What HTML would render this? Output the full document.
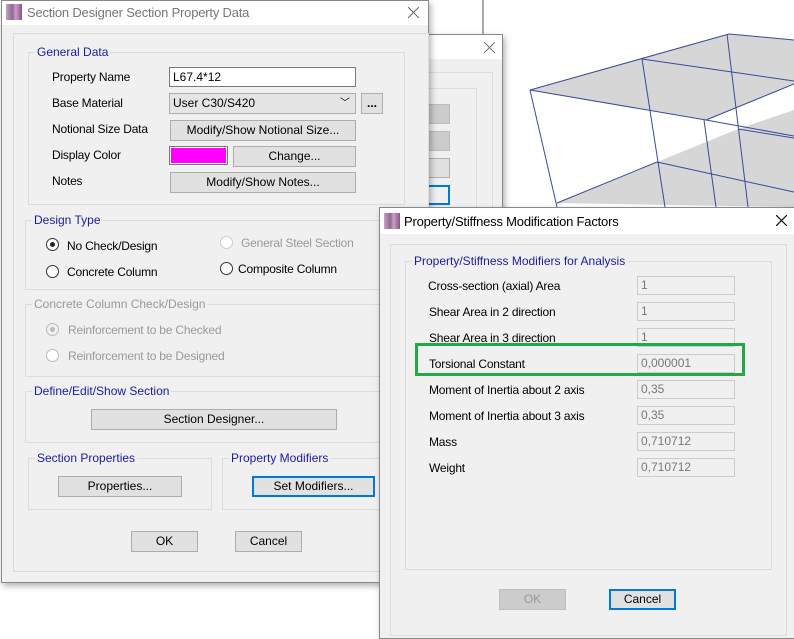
<!DOCTYPE html>
<html><head><meta charset="utf-8"><style>
*{margin:0;padding:0;box-sizing:border-box}
body{width:794px;height:635px;position:relative;overflow:hidden;background:#fff;font-family:"Liberation Sans",sans-serif;font-size:12px;color:#000}
.a{position:absolute}
.win{position:absolute;background:#f0f0f0;border:1px solid #888;box-shadow:2px 3px 6px rgba(0,0,0,.3)}
.tb{position:absolute;left:0;right:0;top:0;height:24px;background:#fff}
.grp{position:absolute;border:1px solid #dcdcdc}
.gl{position:absolute;top:-8px;left:6px;background:#f0f0f0;padding:0 2px;color:#1a1aa6;white-space:nowrap}
.btn{position:absolute;background:#e1e1e1;border:1px solid #adadad;text-align:center;line-height:18px;white-space:nowrap}
.inp{position:absolute;background:#f0f0f0;border:1px solid #ccc;color:#777;padding-left:3px;line-height:17px}
.rad{position:absolute;width:13px;height:13px;border:1px solid #333;border-radius:50%;background:#fff}
.lb{position:absolute;white-space:nowrap;letter-spacing:-0.2px}
.icon{position:absolute;width:16px;height:16px;background:linear-gradient(90deg,#c9a0b8,#8a6a9a 40%,#d59ac0 60%,#7a5a8a);}
</style></head><body>
<svg class="a" style="left:0;top:0" width="794" height="635">
<line x1="483" y1="0" x2="483" y2="35" stroke="#555"/>
<polygon points="530,90 729,34 794,40 794,84 706,120" fill="#d6d6d6"/>
<polygon points="557,203 657,162 738,129 794,110 794,207" fill="#d6d6d6"/>
<g stroke="#3a4a9a" stroke-width="1" fill="none">
<line x1="530" y1="90" x2="729" y2="34"/>
<line x1="729" y1="34" x2="794" y2="40"/>
<line x1="530" y1="90" x2="706" y2="120"/>
<line x1="706" y1="120" x2="794" y2="84"/>
<line x1="642" y1="59" x2="794" y2="81"/>
<line x1="706" y1="120" x2="794" y2="136"/>
<line x1="530" y1="90" x2="557" y2="207"/>
<line x1="642" y1="59" x2="665" y2="207"/>
<line x1="727" y1="34" x2="748" y2="207"/>
<line x1="704" y1="120" x2="716" y2="207"/>
<line x1="557" y1="203" x2="657" y2="162"/>
<line x1="657" y1="162" x2="794" y2="192"/>
<line x1="738" y1="129" x2="794" y2="138"/>
</g>
</svg>
<div class="win" style="left:420px;top:34px;width:83px;height:180px">
<div class="tb"></div>
<svg class="a" style="left:63px;top:7px" width="11" height="11"><path d="M0 0L11 11M11 0L0 11" stroke="#777" stroke-width="1"/></svg>
<div class="a" style="left:0;top:37px;width:72px;height:150px;border:1px solid #dcdcdc;border-left:none"></div>
<div class="a" style="left:0;top:53px;width:56px;height:140px;border:1px solid #dcdcdc;border-left:none"></div>
<div class="a" style="left:0;top:69px;width:29px;height:20px;background:#ccc;border:1px solid #bbb"></div>
<div class="a" style="left:0;top:96px;width:29px;height:20px;background:#ccc;border:1px solid #bbb"></div>
<div class="a" style="left:0;top:123px;width:29px;height:20px;background:#e1e1e1;border:1px solid #adadad"></div>
<div class="a" style="left:0;top:150px;width:29px;height:20px;border:2px solid #0078d7"></div>
</div>
<div class="win" style="left:1px;top:0;width:428px;height:583px">
<div class="tb"></div>
<div class="icon" style="left:4px;top:3px"></div>
<div class="lb" style="left:25px;top:4px;font-size:13px;color:#777">Section Designer Section Property Data</div>
<svg class="a" style="left:406px;top:6px" width="11" height="11"><path d="M0 0L11 11M11 0L0 11" stroke="#666" stroke-width="1"/></svg>
<div class="a" style="left:11px;top:32px;width:416px;height:539px;border:1px solid #dcdcdc"></div>
<div class="grp" style="left:26px;top:51px;width:377px;height:153px"><div class="gl" style="left:6px">General Data</div></div>
<div class="lb" style="left:50px;top:69px">Property Name</div>
<div class="a" style="left:167px;top:66px;width:187px;height:20px;background:#fff;border:1px solid #7a7a7a;padding-left:3px;line-height:18px">L67.4*12</div>
<div class="lb" style="left:50px;top:95px">Base Material</div>
<div class="a" style="left:167px;top:92px;width:187px;height:21px;background:#e5e5e5;border:1px solid #adadad;padding-left:3px;line-height:19px">User C30/S420<span style="position:absolute;right:5px;top:0;font-size:10px">﹀</span></div>
<div class="btn" style="left:359px;top:92px;width:22px;height:21px;font-weight:bold">...</div>
<div class="lb" style="left:50px;top:121px">Notional Size Data</div>
<div class="btn" style="left:168px;top:119px;width:186px;height:21px">Modify/Show Notional Size...</div>
<div class="lb" style="left:50px;top:147px">Display Color</div>
<div class="a" style="left:167px;top:145px;width:59px;height:19px;background:#ff00ff;border:1px solid #777;outline:1px solid #fff;outline-offset:-2px"></div>
<div class="btn" style="left:231px;top:145px;width:123px;height:21px">Change...</div>
<div class="lb" style="left:50px;top:173px">Notes</div>
<div class="btn" style="left:168px;top:171px;width:186px;height:21px">Modify/Show Notes...</div>
<div class="grp" style="left:23px;top:219px;width:400px;height:70px"><div class="gl">Design Type</div></div>
<div class="rad" style="left:44px;top:237px"><div class="a" style="left:3px;top:3px;width:5px;height:5px;border-radius:50%;background:#222"></div></div>
<div class="lb" style="left:65px;top:238px">No Check/Design</div>
<div class="rad" style="left:44px;top:264px"></div>
<div class="lb" style="left:65px;top:264px">Concrete Column</div>
<div class="rad" style="left:218px;top:235px;border-color:#ccc"></div>
<div class="lb" style="left:239px;top:235px;color:#999">General Steel Section</div>
<div class="rad" style="left:218px;top:261px"></div>
<div class="lb" style="left:236px;top:261px">Composite Column</div>
<div class="grp" style="left:23px;top:303px;width:400px;height:73px"><div class="gl" style="color:#999">Concrete Column Check/Design</div></div>
<div class="rad" style="left:44px;top:322px;border-color:#bbb;background:#f0f0f0"><div class="a" style="left:3px;top:3px;width:5px;height:5px;border-radius:50%;background:#bbb"></div></div>
<div class="lb" style="left:66px;top:322px;color:#999">Reinforcement to be Checked</div>
<div class="rad" style="left:44px;top:348px;border-color:#bbb"></div>
<div class="lb" style="left:66px;top:348px;color:#999">Reinforcement to be Designed</div>
<div class="grp" style="left:23px;top:390px;width:400px;height:52px"><div class="gl">Define/Edit/Show Section</div></div>
<div class="btn" style="left:89px;top:408px;width:246px;height:21px">Section Designer...</div>
<div class="grp" style="left:26px;top:457px;width:184px;height:52px"><div class="gl">Section Properties</div></div>
<div class="btn" style="left:56px;top:475px;width:124px;height:21px">Properties...</div>
<div class="grp" style="left:220px;top:457px;width:210px;height:52px"><div class="gl">Property Modifiers</div></div>
<div class="btn" style="left:250px;top:475px;width:123px;height:21px;border:2px solid #0078d7;line-height:17px">Set Modifiers...</div>
<div class="btn" style="left:129px;top:530px;width:67px;height:21px">OK</div>
<div class="btn" style="left:233px;top:530px;width:67px;height:21px">Cancel</div>
</div>
<div class="win" style="left:379px;top:207px;width:420px;height:432px">
<div class="tb" style="height:26px"></div>
<div class="icon" style="left:4px;top:5px"></div>
<div class="lb" style="left:24px;top:6px;font-size:13px">Property/Stiffness Modification Factors</div>
<svg class="a" style="left:396px;top:7px" width="11" height="11"><path d="M0 0L11 11M11 0L0 11" stroke="#111" stroke-width="1.2"/></svg>
<div class="a" style="left:10px;top:36px;width:397px;height:392px;border:1px solid #dcdcdc"></div>
<div class="grp" style="left:25px;top:53px;width:367px;height:309px"><div class="gl" style="color:#1a1aa6">Property/Stiffness Modifiers for Analysis</div></div>
<div class="lb" style="left:48px;top:71px">Cross-section (axial) Area</div>
<div class="inp" style="left:257px;top:68px;width:98px;height:19px">1</div>
<div class="lb" style="left:49px;top:97px">Shear Area in 2 direction</div>
<div class="inp" style="left:257px;top:94px;width:98px;height:19px">1</div>
<div class="lb" style="left:49px;top:123px">Shear Area in 3 direction</div>
<div class="inp" style="left:257px;top:120px;width:98px;height:19px">1</div>
<div class="lb" style="left:49px;top:149px">Torsional Constant</div>
<div class="inp" style="left:257px;top:146px;width:98px;height:19px">0,000001</div>
<div class="a" style="left:35px;top:135px;width:330px;height:33px;border:3px solid #22a845"></div>
<div class="lb" style="left:49px;top:175px">Moment of Inertia about 2 axis</div>
<div class="inp" style="left:257px;top:172px;width:98px;height:19px">0,35</div>
<div class="lb" style="left:49px;top:201px">Moment of Inertia about 3 axis</div>
<div class="inp" style="left:257px;top:198px;width:98px;height:19px">0,35</div>
<div class="lb" style="left:49px;top:227px">Mass</div>
<div class="inp" style="left:257px;top:224px;width:98px;height:19px">0,710712</div>
<div class="lb" style="left:49px;top:253px">Weight</div>
<div class="inp" style="left:257px;top:250px;width:98px;height:19px">0,710712</div>
<div class="btn" style="left:119px;top:381px;width:67px;height:21px;background:#ccc;border-color:#bfbfbf;color:#999">OK</div>
<div class="btn" style="left:229px;top:381px;width:67px;height:21px;border:2px solid #0078d7;line-height:17px">Cancel</div>
</div>
</body></html>
